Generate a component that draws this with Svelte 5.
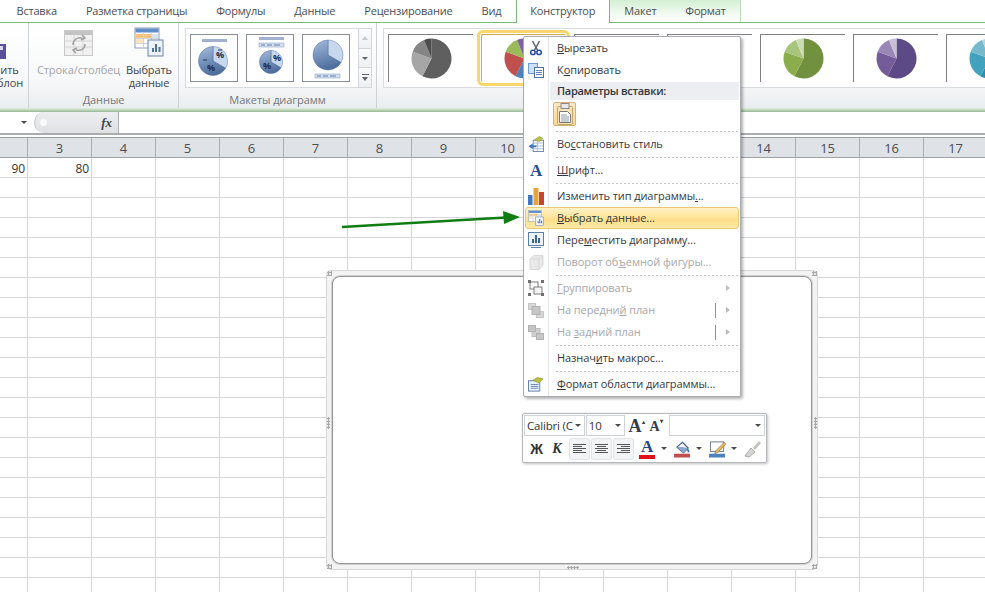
<script>
	const tabs = [
		{ name: 'Вставка' },
		{ name: 'Разметка страницы' },
		{ name: 'Формулы' },
		{ name: 'Данные' },
		{ name: 'Рецензирование' },
		{ name: 'Вид' },
		{ name: 'Конструктор', active: true },
		{ name: 'Макет', tool: true },
		{ name: 'Формат', tool: true }
	];

	const styles = [
		['#5f5f5f', '#a6a6a6', '#858585', '#4d4d4d'],
		['#4f81bd', '#c0504d', '#9bbb59', '#8064a2'],
		['#5f5f5f', '#a6a6a6', '#858585', '#4d4d4d'],
		['#5f5f5f', '#a6a6a6', '#858585', '#4d4d4d'],
		['#71913f', '#8cad4e', '#a9c47d', '#cddcb8'],
		['#5c4a86', '#745c9b', '#9b86b8', '#c7bdd6'],
		['#2f8fab', '#43a3bf', '#76b9cd', '#b3d7e2']
	];

	const columns = Array.from({ length: 17 }, (_, i) => i + 2);
	const rows = Array.from({ length: 22 }, (_, i) => i);

	const menu = [
		{ icon: 'cut', label: ['', 'В', 'ырезать'] },
		{ icon: 'copy', label: ['К', 'о', 'пировать'] },
		{ head: true },
		{ paste: true },
		{ sep: true },
		{ icon: 'restore', label: ['Во', 'с', 'становить стиль'] },
		{ sep: true },
		{ icon: 'font', label: ['', 'Ш', 'рифт...'] },
		{ sep: true },
		{ icon: 'bars', label: ['Изменить тип диаграммы', '.', '..'] },
		{ icon: 'data', label: ['', 'В', 'ыбрать данные...'], hot: true },
		{ icon: 'move', label: ['Пере', 'м', 'естить диаграмму...'] },
		{ icon: 'rotate', label: ['Поворот об', 'ъ', 'емной фигуры...'], off: true },
		{ sep: true },
		{ icon: 'group', label: ['', 'Г', 'руппировать'], off: true, sub: true },
		{ icon: 'front', label: ['На передни', 'й', ' план'], off: true, sub: true, bar: true },
		{ icon: 'back', label: ['На ', 'з', 'адний план'], off: true, sub: true, bar: true },
		{ sep: true },
		{ label: ['Назнач', 'и', 'ть макрос...'] },
		{ sep: true },
		{ icon: 'format', label: ['', 'Ф', 'ормат области диаграммы...'] }
	];

	function slice(cx, cy, r, from, to) {
		const rad = (d) => ((d - 90) * Math.PI) / 180;
		const x0 = cx + r * Math.cos(rad(from));
		const y0 = cy + r * Math.sin(rad(from));
		const x1 = cx + r * Math.cos(rad(to));
		const y1 = cy + r * Math.sin(rad(to));
		const big = to - from > 180 ? 1 : 0;
		return `M${cx} ${cy}L${x0.toFixed(2)} ${y0.toFixed(2)}A${r} ${r} 0 ${big} 1 ${x1.toFixed(2)} ${y1.toFixed(2)}Z`;
	}

	const cuts = [0, 207, 290, 338, 360];
</script>

{#snippet dataIcon(size)}
	<svg width={size} height={size} viewBox="0 0 30 30">
		<rect x="1" y="1" width="24" height="20" fill="#fff" stroke="#8d9db3" />
		<rect x="1.5" y="1.5" width="23" height="4" fill="#5f8fc9" />
		<rect x="2" y="7" width="7" height="4" fill="#f3c382" />
		<rect x="10" y="7" width="7" height="4" fill="#f3c382" />
		<rect x="2" y="12" width="7" height="4" fill="#fbe6c4" />
		<rect x="18" y="7" width="6" height="4" fill="#d6e2f1" />
		<path d="M9.5 6v15M17.5 6v15M1 11.5h24M1 16.5h24" stroke="#b9c6d6" stroke-width="0.7" />
		<rect x="14" y="13" width="15" height="16" fill="#eef3fa" stroke="#6d86a8" />
		<path d="M18 25v-4h2v4zM21 25v-8h2v8zM24.500 25v-5h2v5z" fill="#4f7199" />
	</svg>
{/snippet}

{#snippet icon(name)}
	{#if name === 'cut'}
		<svg width="14" height="18" viewBox="0 0 16 18">
			<path d="M4 1l6 11M12 1L6 12" stroke="#5d6673" stroke-width="1.700" fill="none" />
			<circle cx="4.500" cy="14" r="2.500" fill="none" stroke="#2e4fa8" stroke-width="1.800" />
			<circle cx="11.500" cy="14" r="2.500" fill="none" stroke="#2e4fa8" stroke-width="1.800" />
		</svg>
	{:else if name === 'copy'}
		<svg width="16" height="15" viewBox="0 0 16 15">
			<rect x="0.500" y="0.500" width="9" height="10" fill="#cfe1f7" stroke="#6f9bd2" />
			<rect x="6.500" y="4.500" width="9" height="10" fill="#fff" stroke="#4f74aa" />
			<path d="M8 7.500h6M8 9.500h6M8 11.500h6" stroke="#5f86bb" />
		</svg>
	{:else if name === 'paste'}
		<svg width="17" height="16" viewBox="0 0 17 16">
			<rect x="0.500" y="2.500" width="12" height="13" fill="#e3b44f" stroke="#8a6a2a" />
			<rect x="4" y="0.500" width="5" height="4" fill="#6b6f75" />
			<rect x="7.500" y="7.500" width="9" height="8" fill="#fff" stroke="#5a6f8f" />
			<path d="M9 10h6M9 12.500h6" stroke="#6e88ad" />
		</svg>
	{:else if name === 'restore'}
		<svg width="16" height="16" viewBox="0 0 17 17">
			<rect x="5.500" y="4.500" width="11" height="12" fill="#fff" stroke="#6f88a8" />
			<path d="M6 7.500h10M6 10.500h10M6 13.500h10M10 5v11" stroke="#a9bdd6" />
			<path d="M7 4l5-3.500 4 2L12 6z" fill="#bcc44f" stroke="#8c9536" stroke-width="0.600" />
			<path d="M5 8L0.500 11 5 14v-2h4v-2H5z" fill="#3a74c4" />
		</svg>
	{:else if name === 'font'}
		<span class="font-a">A</span>
	{:else if name === 'bars'}
		<svg width="16" height="17" viewBox="0 0 16 17">
			<rect x="0" y="7" width="4.500" height="10" fill="#3f77bd" />
			<rect x="5.500" y="0" width="5" height="17" fill="#e8a33a" />
			<rect x="11" y="4" width="5" height="13" fill="#c8452f" />
		</svg>
	{:else if name === 'data'}
		{@render dataIcon(16)}
	{:else if name === 'move'}
		<svg width="16" height="16" viewBox="0 0 16 16">
			<rect x="0.500" y="0.500" width="15" height="13" fill="#e9f0f8" stroke="#5f7fa6" />
			<path d="M4 11V7h2v4zM7 11V3h2v8zM10 11V6h2v5z" fill="#41648f" />
			<path d="M3 15.500h10" stroke="#5f7fa6" />
		</svg>
	{:else if name === 'rotate'}
		<svg width="15" height="15" viewBox="0 0 15 15">
			<path d="M1 4l4-3.500h9V10l-4 4.500H1z" fill="#e8e8e8" stroke="#d8d8d8" />
			<path d="M1 4h9v10M10 4l4-3.500" stroke="#d8d8d8" fill="none" />
		</svg>
	{:else if name === 'group'}
		<svg width="16" height="16" viewBox="0 0 16 16">
			<rect x="2" y="2" width="8" height="7" fill="none" stroke="#7c7c7c" />
			<rect x="6" y="7" width="8" height="7" fill="#f4f4f4" stroke="#7c7c7c" />
			<path d="M0 0h3v3H0zM13 0h3v3h-3zM0 13h3v3H0zM13 13h3v3h-3z" fill="#6f6f6f" />
		</svg>
	{:else if name === 'front'}
		<svg width="16" height="15" viewBox="0 0 16 15">
			<rect x="0.500" y="0.500" width="7" height="6" fill="#d8d8d8" stroke="#c6c6c6" />
			<rect x="8.500" y="8.500" width="7" height="6" fill="#d8d8d8" stroke="#c6c6c6" />
			<rect x="4" y="3.500" width="8" height="8" fill="#c6c6c6" stroke="#b2b2b2" />
		</svg>
	{:else if name === 'back'}
		<svg width="16" height="15" viewBox="0 0 16 15">
			<rect x="4" y="3.500" width="8" height="8" fill="#d0d0d0" stroke="#bcbcbc" />
			<rect x="0.500" y="0.500" width="7" height="6" fill="#c6c6c6" stroke="#b2b2b2" />
			<rect x="8.500" y="8.500" width="7" height="6" fill="#c6c6c6" stroke="#b2b2b2" />
		</svg>
	{:else if name === 'format'}
		<svg width="16" height="15" viewBox="0 0 17 15">
			<rect x="0.500" y="3.500" width="12" height="11" fill="#e9f1f9" stroke="#5f7fa6" />
			<path d="M3 7.500h8M3 9.500h8M3 11.500h8" stroke="#6b89b0" />
			<path d="M5 3L10 0l6 1.500L12 6z" fill="#b7bf45" stroke="#868e30" stroke-width="0.600" />
		</svg>
	{/if}
{/snippet}

<div class="app">
	<div class="tabs">
		{#each tabs as tab}
			<div class="tab" class:active={tab.active} class:tool={tab.tool}>{tab.name}</div>
		{/each}
	</div>

	<div class="ribbon">
		<section class="group g-first">
			<div class="cut-off">
				<svg width="6" height="15" viewBox="0 0 6 15">
					<rect x="-6" y="0" width="12" height="15" fill="#5a4f9a" />
					<rect x="0" y="2" width="3" height="4" fill="#d9d6ee" />
				</svg>
				<span>ить<br />блон</span>
			</div>
		</section>

		<section class="group g-data">
			<div class="big-buttons">
				<div class="big off">
					<svg width="30" height="27" viewBox="0 0 30 27">
						<rect x="0.500" y="0.500" width="28" height="25" fill="#f1f1f1" stroke="#c9c9c9" />
						<rect x="1" y="1" width="27" height="4" fill="#c4c4c4" />
						<path d="M1 11h27M1 17h27M10 5v20M19 5v20" stroke="#d5d5d5" />
						<path d="M9 15c0-5 4-8 9-7M18 5l3 3-4 2M21 14c0 5-4 7-9 6M12 23l-3-3 4-2" fill="none" stroke="#9f9f9f" stroke-width="1.500" />
					</svg>
					<span>Строка/столбец</span>
				</div>
				<div class="big">
					{@render dataIcon(30)}
					<span>Выбрать<br />данные</span>
				</div>
			</div>
			<div class="group-label">Данные</div>
		</section>

		<section class="group g-layouts">
			<div class="layouts">
				<div class="layout">
					<svg width="46" height="46" viewBox="0 0 46 46">
						<defs>
							<linearGradient id="pie-main" x1="0" y1="0" x2="0.300" y2="1">
								<stop offset="0" stop-color="#a5bcdc" />
								<stop offset="1" stop-color="#4f6f9f" />
							</linearGradient>
						</defs>
						<rect x="11" y="4" width="25" height="3" fill="#9fb1cf" />
						<path d={slice(22, 26, 14.500, 0, 120)} fill="#c7d8ee" stroke="#5d7ba8" stroke-width="0.500" />
						<path d={slice(22, 26, 14.500, 120, 360)} fill="url(#pie-main)" stroke="#4d6a98" stroke-width="0.500" />
						<text x="25" y="23" class="pct">%</text>
						<text x="16" y="36" class="pct">%</text>
						<path d="M12 25h4M27 15h4" stroke="#26344f" />
					</svg>
				</div>
				<div class="layout">
					<svg width="46" height="46" viewBox="0 0 46 46">
						<rect x="12" y="2" width="25" height="3" fill="#9fb1cf" />
						<rect x="12" y="8" width="25" height="4" fill="#d5e1f2" stroke="#7b95bd" stroke-width="0.500" />
						<path d="M14 10h4M20 10h5M27 10h6" stroke="#48638f" stroke-width="0.800" />
						<path d={slice(24, 27, 11.500, 0, 120)} fill="#c7d8ee" stroke="#5d7ba8" stroke-width="0.500" />
						<path d={slice(24, 27, 11.500, 120, 360)} fill="url(#pie-main)" stroke="#4d6a98" stroke-width="0.500" />
						<text x="26" y="26" class="pct">%</text>
						<text x="16" y="34" class="pct">%</text>
					</svg>
				</div>
				<div class="layout">
					<svg width="46" height="46" viewBox="0 0 46 46">
						<path d={slice(25, 20, 15, 0, 120)} fill="#c7d8ee" stroke="#5d7ba8" stroke-width="0.500" />
						<path d={slice(25, 20, 15, 120, 360)} fill="url(#pie-main)" stroke="#55729f" stroke-width="0.500" />
						<rect x="12" y="39" width="25" height="4" fill="#d5e1f2" stroke="#7b95bd" stroke-width="0.500" />
						<path d="M14 41h4M20 41h5M27 41h6" stroke="#48638f" stroke-width="0.800" />
					</svg>
				</div>
				<div class="scroller">
					<button class="faint" aria-label="вверх"><i class="up"></i></button>
					<button aria-label="вниз"><i class="down"></i></button>
					<button aria-label="ещё"><i class="more"></i></button>
				</div>
			</div>
			<div class="group-label">Макеты диаграмм</div>
		</section>

		<section class="group g-styles">
			<div class="gallery">
				{#each styles as colors, i}
					<div class="style" class:selected={i === 1}>
						<svg width="85" height="47" viewBox="0 0 85 47">
							{#each colors as color, k}
								<path d={slice(42.500, 23.500, 20, cuts[k], cuts[k + 1])} fill={color} />
							{/each}
						</svg>
					</div>
				{/each}
			</div>
			<div class="group-label">Стили диаграмм</div>
		</section>
	</div>
	<div class="ribbon-edge"></div>

	<div class="formula">
		<div class="namebox"><i class="down dark"></i></div>
		<div class="fx-box">
			<span class="knob"></span>
			<span class="fx">fx</span>
		</div>
		<div class="input"></div>
	</div>

	<div class="sheet">
		<div class="cell corner"></div>
		{#each columns as col}
			<div class="cell head">{col + 1}</div>
		{/each}
		{#each rows as row}
			<div class="cell first">{row === 0 ? '90' : ''}</div>
			{#each columns as col}
				<div class="cell">{row === 0 && col === 2 ? '80' : ''}</div>
			{/each}
		{/each}
	</div>

	<div class="chart">
		<span class="grip tl"></span>
		<span class="grip tr"></span>
		<span class="grip bl"></span>
		<span class="grip br"></span>
		<span class="grip ml"></span>
		<span class="grip mr"></span>
		<span class="grip mb"></span>
		<div class="plot"></div>
	</div>

	<svg class="arrow" width="180" height="24" viewBox="0 0 180 24">
		<path d="M0 19L164 9.500" stroke="#0f7d12" stroke-width="2.600" />
		<path d="M161 3l17 6-16 7z" fill="#0f7d12" />
	</svg>

	<div class="menu">
		{#each menu as item}
			{#if item.sep}
				<div class="sep"></div>
			{:else if item.head}
				<div class="head-row">Параметры вставки:</div>
			{:else if item.paste}
				<div class="paste-row">
					<div class="paste-btn">
						<svg width="18" height="22" viewBox="0 0 18 22">
							<rect x="1.500" y="3.500" width="15" height="18" rx="1" fill="#f9e3b8" stroke="#c4a36d" />
							<rect x="5" y="0.500" width="8" height="5" fill="#e8e8e8" stroke="#8b8b8b" />
							<path d="M3.500 8.500h8l3 3v8h-11z" fill="#fff" stroke="#7a7a7a" />
							<path d="M5 12h6M5 14h8M5 16h8M5 18h8" stroke="#8f9bab" />
						</svg>
					</div>
				</div>
			{:else}
				<div class="item" class:hot={item.hot} class:off={item.off}>
					<span class="ico">
						{#if item.icon}{@render icon(item.icon)}{/if}
					</span>
					<span class="text">{item.label[0]}<u>{item.label[1]}</u>{item.label[2]}</span>
					{#if item.bar}<span class="bar"></span>{/if}
					{#if item.sub}<span class="sub"></span>{/if}
				</div>
			{/if}
		{/each}
	</div>

	<div class="mini">
		<div class="mini-row">
			<div class="combo c-font">Calibri (C<i class="down dark"></i></div>
			<div class="combo c-size">10<i class="down dark"></i></div>
			<span class="grow">A<small>▴</small></span>
			<span class="shrink">A<small>▾</small></span>
			<div class="combo c-style"><i class="down dark"></i></div>
		</div>
		<div class="mini-row second">
			<span class="bold">Ж</span>
			<span class="ital">К</span>
			<div class="aligns">
				{#each ['left', 'mid', 'right'] as kind}
					<span class="align {kind}"><b></b><b></b><b></b><b></b><b></b></span>
				{/each}
			</div>
			<span class="color-a">A<em></em></span>
			<i class="down dark"></i>
			<svg class="tool-ico" width="17" height="18" viewBox="0 0 18 18">
				<path d="M3 7l6-5 6 6-5 5z" fill="#fff" stroke="#3f5f8f" stroke-width="1.300" />
				<path d="M3 7l6 0 6 1-5 5z" fill="#8aa8d0" />
				<path d="M14 8c2 2 3 3.500 2 4.500s-2.500-.5-2-4.500z" fill="#3d74b8" />
				<rect x="0" y="14" width="17" height="4" fill="#c0504d" />
			</svg>
			<i class="down dark"></i>
			<svg class="tool-ico" width="17" height="18" viewBox="0 0 18 18">
				<rect x="1.500" y="1.500" width="14" height="10" fill="#fff" stroke="#6a7686" />
				<path d="M7 11l9-9 2 2-9 9-3 1z" fill="#e3b75a" stroke="#7b6a3a" stroke-width="0.600" />
				<rect x="0" y="14" width="17" height="4" fill="#4f81bd" />
			</svg>
			<i class="down dark"></i>
			<svg class="tool-ico" width="18" height="18" viewBox="0 0 18 18">
				<path d="M1 16l6-8 4 4-6 5z" fill="#d5d5d5" stroke="#a9a9a9" />
				<path d="M9 8l6-7 2 2-6 7z" fill="#c3c3c3" />
			</svg>
		</div>
	</div>
</div>

<style>
	:global(body) {
		margin: 0;
		background: #fff;
	}

	.app {
		position: relative;
		width: 985px;
		height: 592px;
		overflow: hidden;
		font-family: 'Open Sans', 'Noto Sans', sans-serif;
		font-size: 11px;
		letter-spacing: -0.08px;
		color: #3f4348;
	}

	svg {
		display: block;
	}

	.tabs {
		display: flex;
		height: 22px;
		padding-left: 2px;
		border-bottom: 1px solid #7cb97f;
		box-sizing: content-box;
	}

	.tab {
		padding: 0 14.5px;
		line-height: 22px;
		white-space: nowrap;
		color: #4a4e54;
		letter-spacing: -0.2px;
	}

	.tab.tool {
		background: linear-gradient(#d3efd3, #f6fbf6 70%, #fff);
	}

	.tab.tool:last-child {
		border-right: 1px solid #b9dcb9;
	}

	.tab.active {
		height: 23px;
		background: #fff;
		border: 1px solid #7cb97f;
		border-top: 0;
		border-bottom: 0;
		box-sizing: border-box;
		padding: 0 13.500px;
	}

	.ribbon {
		display: flex;
		height: 85px;
	}

	.group {
		display: flex;
		flex-direction: column;
		box-sizing: border-box;
		padding-top: 5px;
		border-right: 1px solid #cdd2d6;
		background: linear-gradient(#fff, #f8f9fa 65%, #eaedef);
	}

	.g-first {
		width: 29px;
	}

	.g-data {
		width: 150px;
	}

	.g-layouts {
		width: 198px;
	}

	.g-styles {
		flex: 1;
		min-width: 0;
		border-right: 0;
	}

	.group-label {
		margin-top: auto;
		height: 16px;
		line-height: 15px;
		text-align: center;
		color: #72777d;
	}

	.cut-off {
		display: flex;
		flex-direction: column;
		line-height: 13px;
		padding-top: 16px;
	}

	.cut-off span {
		margin: 4px 0 0 -3px;
		width: 25px;
		text-align: center;
		white-space: nowrap;
	}

	.big-buttons {
		display: flex;
		padding-left: 7px;
	}

	.big {
		display: flex;
		flex-direction: column;
		align-items: center;
		line-height: 13px;
		text-align: center;
		margin-right: 5px;
	}

	.big span {
		margin-top: 6px;
		white-space: nowrap;
	}

	.big.off {
		color: #a2a5a9;
		width: 85px;
		padding-top: 2px;
	}

	.big.off span {
		margin-top: 6px;
	}

	.big:not(.off) {
		margin-top: -1px;
		width: 46px;
	}

	.layouts {
		display: flex;
		gap: 8px;
		height: 60px;
		margin-left: 6px;
		width: 184px;
		box-sizing: border-box;
		padding: 5px 0 0 4px;
		border: 1px solid #d8dcdf;
		background: #fff;
	}

	.layout {
		flex: none;
		width: 46px;
		height: 46px;
		border: 1px solid #8b8f94;
	}

	.pct {
		font-size: 9px;
		font-weight: 700;
		fill: #1f2e4a;
	}

	.scroller {
		flex: none;
		display: flex;
		flex-direction: column;
		width: 14px;
		margin: -6px -1px -1px auto;
	}

	.scroller button {
		flex: 1;
		width: 14px;
		display: grid;
		place-items: center;
		padding: 0;
		background: linear-gradient(#fbfbfc, #eef0f2);
		border: 1px solid #d3d7db;
		border-top: 0;
	}

	.scroller button:first-child {
		border-top: 1px solid #d3d7db;
	}

	.up {
		border: 3px solid transparent;
		border-bottom: 4px solid #c6cacd;
		border-top: 0;
	}

	.down {
		display: inline-block;
		border: 3px solid transparent;
		border-top: 3px solid #60656b;
		border-bottom: 0;
	}

	.down.dark {
		border-top-color: #4a4a4a;
	}

	.more {
		width: 7px;
		height: 1px;
		background: #60656b;
		position: relative;
		top: -3px;
	}

	.more::after {
		content: '';
		position: absolute;
		left: 0;
		top: 3px;
		border: 3.500px solid transparent;
		border-top: 4px solid #60656b;
		border-bottom: 0;
	}

	.gallery {
		display: flex;
		gap: 8px;
		height: 60px;
		margin-left: 6px;
		box-sizing: border-box;
		padding: 5px 0 0 4px;
		border: 1px solid #d8dcdf;
		border-right: 0;
		background: #fff;
		overflow: hidden;
	}

	.style {
		flex: none;
		width: 85px;
		height: 48px;
		box-sizing: border-box;
		border-top: 1px solid #7d7f82;
		border-left: 1px solid #7d7f82;
	}

	.style.selected {
		border-color: #c9a857;
		outline: 3px solid #f8d66b;
		outline-offset: 1px;
		border-radius: 2px;
	}

	.ribbon-edge {
		height: 4px;
		background: linear-gradient(#e8f0e6, #b9d8b6 50%, #9ab29b);
	}

	.formula {
		display: flex;
		height: 21px;
		border-bottom: 2px solid #a9adb2;
		margin-bottom: 2px;
	}

	.namebox {
		width: 34px;
		display: flex;
		align-items: center;
		padding-left: 21px;
		box-sizing: border-box;
	}

	.fx-box {
		display: flex;
		align-items: center;
		justify-content: space-between;
		width: 85px;
		box-sizing: border-box;
		padding: 0 6px 0 5px;
		border-radius: 11px 0 0 11px;
		border-right: 1px solid #a9adb2;
		border-left: 1px solid #c3c6ca;
		background: linear-gradient(#eceef0, #dfe1e4);
	}

	.knob {
		width: 7px;
		height: 7px;
		border-radius: 50%;
		background: #fafafa;
	}

	.fx {
		font-family: 'Liberation Serif', serif;
		font-style: italic;
		font-weight: 700;
		font-size: 13px;
		color: #444;
	}

	.input {
		flex: 1;
	}

	.sheet {
		display: grid;
		grid-template-columns: 28px repeat(17, 64px);
		grid-auto-rows: 20px;
		border-top: 1px solid #9aa0a6;
	}

	.cell {
		box-sizing: border-box;
		border-right: 1px solid #d4d6d8;
		border-bottom: 1px solid #d4d6d8;
		text-align: right;
		padding-right: 2px;
		font-size: 12px;
		line-height: 21px;
		color: #333;
	}

	.cell.corner,
	.cell.head {
		background: #dfe3e8;
		border-right-color: #a9adb2;
		border-bottom-color: #9ea2a7;
		color: #4a4e54;
		text-align: center;
		padding-right: 0;
		font-size: 13px;
		line-height: 20px;
	}

	.chart {
		position: absolute;
		left: 326px;
		top: 270px;
		width: 492px;
		height: 300px;
		box-sizing: border-box;
		padding: 5px;
		background: #f3f3f3;
		border: 1px solid #d8d8d8;
		border-radius: 5px;
	}

	.plot {
		height: 100%;
		box-sizing: border-box;
		background: #fff;
		border: 1px solid #969696;
		box-shadow: 0 0 0 1px #d2d2d2;
		border-radius: 8px;
	}

	.grip {
		position: absolute;
		width: 5px;
		height: 5px;
		background: radial-gradient(circle at center, #a9a9a9 0 1px, transparent 1.500px) 0 0 / 3px 3px;
	}

	.tl {
		left: 0;
		top: 0;
	}

	.tr {
		right: 0;
		top: 0;
	}

	.bl {
		left: 0;
		bottom: 0;
	}

	.br {
		right: 0;
		bottom: 0;
	}

	.ml {
		left: 0;
		top: 146px;
		height: 12px;
		width: 3px;
	}

	.mr {
		right: 0;
		top: 146px;
		height: 12px;
		width: 3px;
	}

	.mb {
		left: 240px;
		bottom: 0;
		width: 12px;
		height: 3px;
	}

	.arrow {
		position: absolute;
		left: 342px;
		top: 208px;
	}

	.menu {
		position: absolute;
		left: 523px;
		top: 36px;
		width: 218px;
		height: 361px;
		box-sizing: border-box;
		background: linear-gradient(90deg, transparent 24px, #e4e6e8 24px, #e4e6e8 25px, transparent 25px), #fff;
		border: 1px solid #a9abae;
		border-radius: 2px;
		box-shadow: 2px 2px 3px rgba(0, 0, 0, 0.3);
		color: #33373b;
	}

	.item {
		display: flex;
		align-items: center;
		height: 22px;
		margin: 0 1px;
		box-sizing: border-box;
		border: 1px solid transparent;
		border-radius: 3px;
	}

	.item.hot {
		background: linear-gradient(#fdf3c9, #fde08c 60%, #fbe9a8);
		border-color: #e8ca75;
	}

	.item.off {
		color: #a6a8ab;
	}

	.ico {
		flex: none;
		width: 20px;
		display: grid;
		place-items: center;
	}

	.font-a {
		font-family: 'Liberation Serif', serif;
		font-weight: 700;
		font-size: 17px;
		line-height: 17px;
		color: #1f4d8f;
	}

	.text {
		margin-left: 11px;
		white-space: nowrap;
		line-height: 20px;
	}

	.bar {
		margin-left: auto;
		width: 1px;
		height: 15px;
		background: #8f8f8f;
	}

	.sub {
		margin-left: auto;
		margin-right: 8px;
		border: 3.500px solid transparent;
		border-left: 4px solid #bcbcbc;
		border-right: 0;
	}

	.bar + .sub {
		margin-left: 10px;
	}

	.sep {
		height: 4px;
		margin-left: 32px;
		margin-right: 1px;
		box-sizing: border-box;
		padding-top: 1px;
		background: repeating-linear-gradient(90deg, #c4c6c9 0 2px, transparent 2px 4px) 0 1.5px / 100% 1px no-repeat;
	}

	.head-row {
		height: 18px;
		margin: 1px 1px 0 26px;
		padding-left: 7px;
		line-height: 17px;
		font-weight: 600;
		letter-spacing: -0.3px;
		background: #eceef1;
	}

	.paste-row {
		height: 29px;
		padding: 2px 0 0 29px;
		box-sizing: border-box;
	}

	.paste-btn {
		width: 23px;
		height: 24px;
		box-sizing: border-box;
		display: grid;
		place-items: center;
		background: linear-gradient(#fde9c2, #fbd795);
		border: 1px solid #d5b27a;
		border-radius: 2px;
	}

	.mini {
		position: absolute;
		left: 522px;
		top: 413px;
		width: 245px;
		height: 50px;
		box-sizing: border-box;
		padding: 1px 1px;
		background: #fff;
		border: 1px solid #b5b7ba;
		border-radius: 2px;
		box-shadow: 1px 1px 3px rgba(0, 0, 0, 0.25);
		color: #333;
	}

	.mini-row {
		display: flex;
		align-items: center;
		height: 21px;
	}

	.mini-row.second {
		height: 25px;
		padding-left: 5px;
	}

	.combo {
		display: flex;
		align-items: center;
		justify-content: space-between;
		box-sizing: border-box;
		height: 21px;
		padding: 0 3px 0 2px;
		border: 1px solid #d0d3d6;
		font-size: 11.500px;
		white-space: nowrap;
		letter-spacing: -0.2px;
	}

	.c-font {
		width: 61px;
	}

	.c-size {
		width: 39px;
		margin-left: 1px;
	}

	.c-style {
		width: 96px;
		margin-left: 4px;
		justify-content: flex-end;
	}

	.grow,
	.shrink {
		font-family: 'Liberation Serif', serif;
		font-weight: 700;
		color: #2f3a4a;
		line-height: 1;
		white-space: nowrap;
	}

	.grow {
		font-size: 18px;
		margin-left: 4px;
		width: 21px;
	}

	.shrink {
		font-size: 14px;
		width: 16px;
	}

	.grow small,
	.shrink small {
		font-size: 6px;
		vertical-align: 8px;
		color: #2f3a4a;
	}

	.bold {
		font-family: 'Liberation Sans', sans-serif;
		font-weight: 700;
		font-size: 14px;
		width: 21px;
		text-align: center;
		margin-left: -3px;
	}

	.ital {
		font-family: 'Liberation Serif', serif;
		font-style: italic;
		font-weight: 700;
		font-size: 14px;
		width: 20px;
		text-align: center;
	}

	.aligns {
		display: flex;
		gap: 1px;
		margin-left: 2px;
		margin-right: 4px;
	}

	.align {
		display: flex;
		flex-direction: column;
		justify-content: center;
		gap: 1px;
		width: 21px;
		height: 22px;
		box-sizing: border-box;
		padding: 0 3px;
		background: #f3f4f5;
		border: 1px solid #e1e3e5;
		border-radius: 3px;
	}

	.align b {
		display: block;
		height: 1px;
		background: #555;
	}

	.align.left b:nth-child(even) {
		width: 9px;
	}

	.align.mid b:nth-child(even) {
		width: 9px;
		align-self: center;
	}

	.align.right b:nth-child(even) {
		width: 9px;
		align-self: flex-end;
	}

	.color-a {
		position: relative;
		width: 18px;
		text-align: center;
		font-family: 'Liberation Serif', serif;
		font-weight: 700;
		font-size: 17px;
		line-height: 17px;
		color: #23467f;
		padding-bottom: 4px;
	}

	.color-a em {
		position: absolute;
		left: 1px;
		right: 1px;
		bottom: 0;
		height: 4px;
		background: #e0101c;
	}

	.mini-row > .down {
		margin: 0 7px 0 5px;
	}

	.tool-ico {
		flex: none;
	}
</style>
